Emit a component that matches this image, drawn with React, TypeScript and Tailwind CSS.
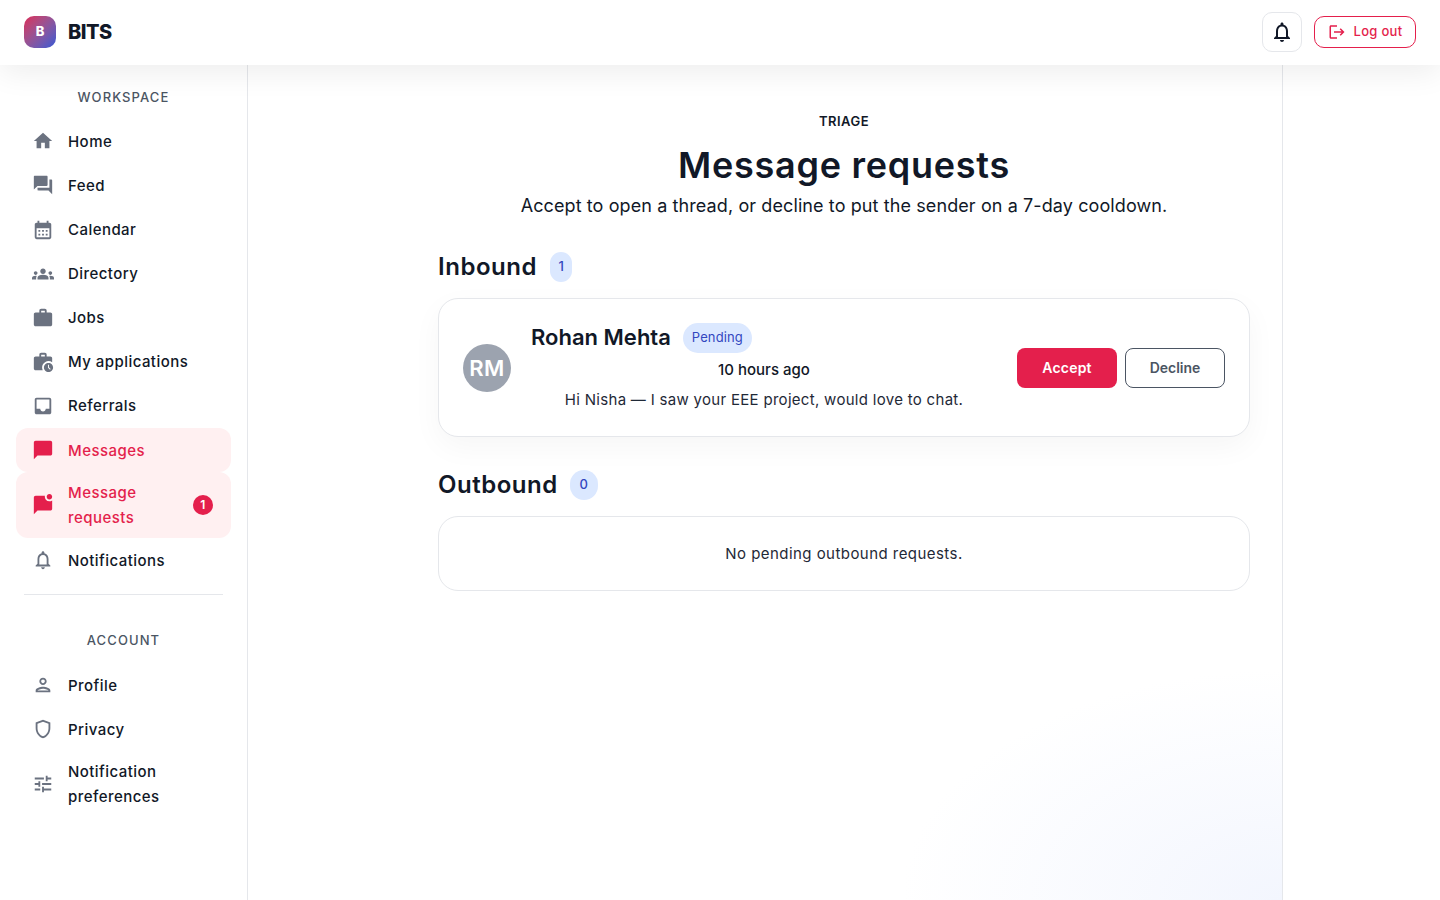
import type { ReactNode } from 'react';
import {
  MdHome,
  MdForum,
  MdCalendarMonth,
  MdGroups,
  MdWork,
  MdWorkHistory,
  MdInbox,
  MdChatBubble,
  MdMarkChatUnread,
  MdOutlineNotifications,
  MdOutlinePerson,
  MdOutlineShield,
  MdTune,
  MdLogout,
} from 'react-icons/md';

interface NavItem {
  label: ReactNode;
  icon: ReactNode;
  active?: boolean;
  badge?: number;
  tall?: boolean;
}

const workspace: NavItem[] = [
  { label: 'Home', icon: <MdHome /> },
  { label: 'Feed', icon: <MdForum /> },
  { label: 'Calendar', icon: <MdCalendarMonth /> },
  { label: 'Directory', icon: <MdGroups /> },
  { label: 'Jobs', icon: <MdWork /> },
  { label: 'My applications', icon: <MdWorkHistory /> },
  { label: 'Referrals', icon: <MdInbox /> },
  { label: 'Messages', icon: <MdChatBubble />, active: true },
  { label: 'Message requests', icon: <MdMarkChatUnread />, active: true, badge: 1, tall: true },
  { label: 'Notifications', icon: <MdOutlineNotifications /> },
];

const account: NavItem[] = [
  { label: 'Profile', icon: <MdOutlinePerson /> },
  { label: 'Privacy', icon: <MdOutlineShield /> },
  { label: 'Notification preferences', icon: <MdTune />, tall: true },
];

function NavRow({ item }: { item: NavItem }) {
  return (
    <a
      className={
        'flex items-center rounded-xl pl-4 pr-[18px] text-[15px] leading-[25px] font-medium tracking-[0.45px] ' +
        (item.tall ? 'py-2 ' : 'h-[44.1px] ') +
        (item.active ? 'bg-[#fff0f1] text-[#e41f4c]' : 'text-[#111827]')
      }
    >
      <span
        className={
          'flex w-[22px] shrink-0 items-center justify-center text-[22px] ' +
          (item.active ? 'text-[#e41f4c]' : 'text-[#6b7280]')
        }
      >
        {item.icon}
      </span>
      <span className="ml-[14px] flex-1 pr-6">{item.label}</span>
      {item.badge && (
        <span className="flex h-5 w-5 shrink-0 items-center justify-center rounded-full bg-[#e41f4c] text-xs font-semibold text-white">
          {item.badge}
        </span>
      )}
    </a>
  );
}

function SectionTitle({ children, className }: { children: ReactNode; className: string }) {
  return (
    <div className={'h-[22px] text-center text-[13px] leading-[22px] font-medium tracking-[1.1px] text-[#4b5563] ' + className}>
      {children}
    </div>
  );
}

function CountPill({ value, round }: { value: number; round?: boolean }) {
  return (
    <span
      className={
        'flex h-[30px] items-center justify-center rounded-full bg-[#dbe8ff] text-[13px] font-medium text-[#3347c0] ' +
        (round ? 'w-[28px]' : 'w-[22px]')
      }
    >
      {value}
    </span>
  );
}

export default function App() {
  return (
    <div className="flex h-[900px] flex-col overflow-hidden bg-white font-['Inter','Liberation_Sans',sans-serif] text-[#111827]">
      {/* Header */}
      <header className="relative z-10 flex h-[65px] shrink-0 items-center justify-between bg-white px-6 pb-px shadow-[0_8px_30px_rgba(0,0,0,0.07)]">
        <div className="flex items-center gap-3">
          <div className="flex h-8 w-8 items-center justify-center rounded-[10px] bg-gradient-to-br from-[#dc1f55] to-[#2f55d4] text-[13px] font-extrabold text-white">
            B
          </div>
          <span className="text-xl font-extrabold tracking-[-0.5px] text-[#111827]">BITS</span>
        </div>
        <div className="flex items-center gap-3">
          <button className="flex h-10 w-10 items-center justify-center rounded-[10px] border border-[#e5e7eb] bg-white text-[24px] text-[#111827]">
            <MdOutlineNotifications />
          </button>
          <button className="flex h-8 w-[102px] items-center justify-center gap-[8px] rounded-[10px] border border-[#e41f4c] text-[13px] font-medium tracking-[0.3px] text-[#e41f4c]">
            <MdLogout size={18} />
            Log out
          </button>
        </div>
      </header>

      <div className="flex min-h-0 flex-1">
        {/* Sidebar */}
        <aside className="w-[248px] shrink-0 border-r border-[#e5e7eb] bg-white pt-[21px] pr-4 pl-4">
          <SectionTitle className="mb-[11.3px]">WORKSPACE</SectionTitle>
          <nav className="flex flex-col">
            {workspace.map((item, i) => (
              <NavRow key={i} item={item} />
            ))}
          </nav>
          <div className="mx-2 mt-3 mb-[34px] h-px bg-[#e5e7eb]" />
          <SectionTitle className="mb-3">ACCOUNT</SectionTitle>
          <nav className="flex flex-col">
            {account.map((item, i) => (
              <NavRow key={i} item={item} />
            ))}
          </nav>
        </aside>

        {/* Main */}
        <main className="w-[1035px] shrink-0 border-r border-[#e5e7eb] bg-[radial-gradient(ellipse_380px_230px_at_100%_100%,#f3f6fe_0%,#ffffff_100%)] pt-[46px] pr-8 pl-[190px]">
          <div className="text-center text-[13px] leading-5 font-semibold tracking-[0.5px] text-[#111827]">TRIAGE</div>
          <h1 className="mt-[9px] text-center text-[36px] leading-[50px] font-semibold tracking-[0.75px] text-[#111827]">
            Message requests
          </h1>
          <p className="mt-[2px] text-center text-[18px] leading-[28px] tracking-[0.1px] text-[#111827]">
            Accept to open a thread, or decline to put the sender on a 7-day cooldown.
          </p>

          <section className="mt-[23px] flex h-[47px] items-center gap-[13px]">
            <h2 className="text-2xl font-semibold tracking-[0.55px] text-[#111827]">Inbound</h2>
            <CountPill value={1} />
          </section>
          <div className="mt-2 flex h-[139px] items-center rounded-[20px] border border-[#e5e7eb] bg-white px-6 shadow-[0_10px_30px_rgba(0,0,0,0.04)]">
            <div className="flex h-12 w-12 shrink-0 items-center justify-center rounded-full bg-[#9ca3af] pt-px text-[22px] font-semibold tracking-[0.5px] text-white">
              RM
            </div>
            <div className="ml-5 flex-1 pb-[2px] text-center">
              <div className="flex items-center gap-3">
                <span className="text-[22px] font-semibold text-[#111827]">Rohan Mehta</span>
                <span className="flex h-[30px] items-center rounded-full bg-[#dbe8ff] px-[9px] pt-px text-[13px] font-normal tracking-[0.1px] text-[#3347c0]">
                  Pending
                </span>
              </div>
              <div className="mt-1 text-[15px] leading-6 font-medium">10 hours ago</div>
              <div className="mt-[6px] text-[15px] leading-6 tracking-[0.3px] text-[#1f2937]">
                Hi Nisha — I saw your EEE project, would love to chat.
              </div>
            </div>
            <div className="ml-5 flex gap-2">
              <button className="h-10 w-[100px] rounded-lg bg-[#e41f4c] text-sm font-semibold tracking-[0.2px] text-white">Accept</button>
              <button className="h-10 w-[100px] rounded-lg border border-[#4b5563] bg-white text-sm font-semibold text-[#4b5563]">
                Decline
              </button>
            </div>
          </div>

          <section className="mt-6 flex h-12 items-center gap-3">
            <h2 className="text-2xl font-semibold tracking-[0.5px] text-[#111827]">Outbound</h2>
            <CountPill value={0} round />
          </section>
          <div className="mt-[7px] flex h-[75px] items-center justify-center rounded-[20px] border border-[#e5e7eb] bg-white pt-px text-[15px] tracking-[0.45px] text-[#1f2937]">
            No pending outbound requests.
          </div>
        </main>
      </div>
    </div>
  );
}
